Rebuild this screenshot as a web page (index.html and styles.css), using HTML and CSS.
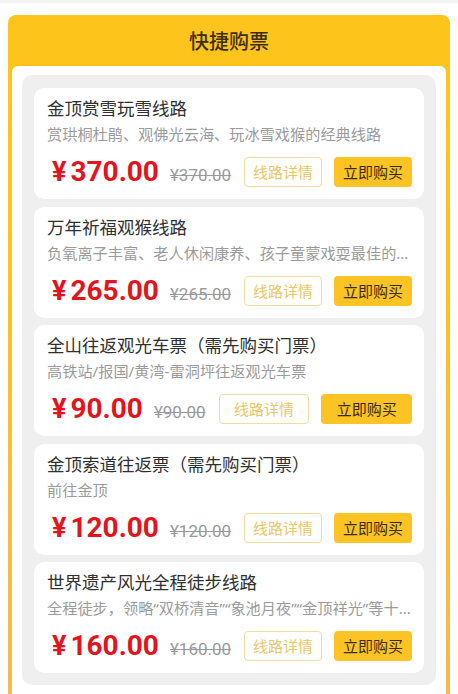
FILE: index.html
```html
<!DOCTYPE html>
<html lang="zh">
<head>
	<meta charset="UTF-8">
	<title>快捷购票</title>
	<link rel="stylesheet" href="styles.css">
</head>
<body>
	<div class="topbar"></div>
	<div class="panel">
		<div class="panel-head">快捷购票</div>
		<div class="panel-body">
			<ul class="list">
				<li class="card">
					<h3 class="card-title">金顶赏雪玩雪线路</h3>
					<p class="card-desc">赏珙桐杜鹃、观佛光云海、玩冰雪戏猴的经典线路</p>
					<div class="card-foot">
						<div class="price"><span class="now"><i>¥</i>370.00</span><span class="old">¥370.00</span></div>
						<div class="btns">
							<span class="btn btn-line">线路详情</span>
							<span class="btn btn-buy">立即购买</span>
						</div>
					</div>
				</li>
				<li class="card">
					<h3 class="card-title">万年祈福观猴线路</h3>
					<p class="card-desc">负氧离子丰富、老人休闲康养、孩子童蒙戏耍最佳的线路，适合全家出游</p>
					<div class="card-foot">
						<div class="price"><span class="now"><i>¥</i>265.00</span><span class="old">¥265.00</span></div>
						<div class="btns">
							<span class="btn btn-line">线路详情</span>
							<span class="btn btn-buy">立即购买</span>
						</div>
					</div>
				</li>
				<li class="card">
					<h3 class="card-title">全山往返观光车票（需先购买门票）</h3>
					<p class="card-desc">高铁站/报国/黄湾-雷洞坪往返观光车票</p>
					<div class="card-foot">
						<div class="price"><span class="now"><i>¥</i>90.00</span><span class="old">¥90.00</span></div>
						<div class="btns">
							<span class="btn btn-line">线路详情</span>
							<span class="btn btn-buy">立即购买</span>
						</div>
					</div>
				</li>
				<li class="card">
					<h3 class="card-title">金顶索道往返票（需先购买门票）</h3>
					<p class="card-desc">前往金顶</p>
					<div class="card-foot">
						<div class="price"><span class="now"><i>¥</i>120.00</span><span class="old">¥120.00</span></div>
						<div class="btns">
							<span class="btn btn-line">线路详情</span>
							<span class="btn btn-buy">立即购买</span>
						</div>
					</div>
				</li>
				<li class="card">
					<h3 class="card-title">世界遗产风光全程徒步线路</h3>
					<p class="card-desc">全程徒步，领略“双桥清音”“象池月夜”“金顶祥光”等十景风光</p>
					<div class="card-foot">
						<div class="price"><span class="now"><i>¥</i>160.00</span><span class="old">¥160.00</span></div>
						<div class="btns">
							<span class="btn btn-line">线路详情</span>
							<span class="btn btn-buy">立即购买</span>
						</div>
					</div>
				</li>
			</ul>
		</div>
	</div>
</body>
</html>
```

FILE: styles.css
```css
*{
	margin: 0;
	padding: 0;
	box-sizing: border-box;
}
ul{
	list-style: none;
}
body{
	background: #fff;
	font-family: "Noto Sans CJK SC", "Noto Sans", sans-serif;
	color: #333;
}
.topbar{
	height: 3px;
	background: #f3f3f3;
}
.panel{
	margin: 12px 8px 0;
	padding: 0 4px;
	border-radius: 8px 8px 0 0;
	background: linear-gradient(#fdc51b, #fcc21f 40%, #f4b950);
	height: 679px;
}
.panel-head{
	height: 51px;
	line-height: 51px;
	text-align: center;
	font-size: 20px;
	font-weight: 500;
	color: #3c2f0a;
}
.panel-body{
	background: #fff;
	border-radius: 6px 6px 0 0;
	padding: 9px 10px 0;
	height: 628px;
}
.list{
	background: #efefef;
	border-radius: 10px;
	padding: 13px 12px 12px;
	display: flex;
	flex-direction: column;
	gap: 7.5px;
}
.card{
	background: #fff;
	border-radius: 10px;
	padding: 8px 12px 12px 13px;
}
.card-title{
	font-size: 17.5px;
	font-weight: 400;
	line-height: 24px;
	color: #2f2f2f;
	white-space: nowrap;
}
.card-desc{
	margin-top: 3px;
	font-family: "Noto Sans", "Noto Sans CJK SC", sans-serif;
	font-size: 15.2px;
	line-height: 22px;
	color: #9b9b9b;
	white-space: nowrap;
	overflow: hidden;
	text-overflow: ellipsis;
}
.card-foot{
	margin-top: 12px;
	display: flex;
	align-items: center;
}
.price{
	display: flex;
	align-items: baseline;
	padding-left: 5px;
}
.now{
	font-family: Roboto, "Noto Sans", sans-serif;
	font-size: 28px;
	font-weight: 700;
	color: #e2141c;
	line-height: 30px;
}
.now i{
	font-style: normal;
	font-size: 27px;
	margin-right: 4px;
}
.old{
	margin-left: 11px;
	font-family: Roboto, "Noto Sans", sans-serif;
	font-size: 17px;
	color: #9a9a9a;
	text-decoration: line-through;
}
.btns{
	flex: 1;
	display: flex;
	gap: 12px;
	margin-left: 13px;
}
.btn{
	flex: 1;
	height: 30px;
	line-height: 28px;
	text-align: center;
	font-size: 15px;
	border-radius: 4px;
	border: 1px solid transparent;
	white-space: nowrap;
}
.btn-line{
	border-color: #efdc9e;
	color: #e8c766;
}
.btn-buy{
	background: #fbc424;
	color: #3a2b06;
}
```
